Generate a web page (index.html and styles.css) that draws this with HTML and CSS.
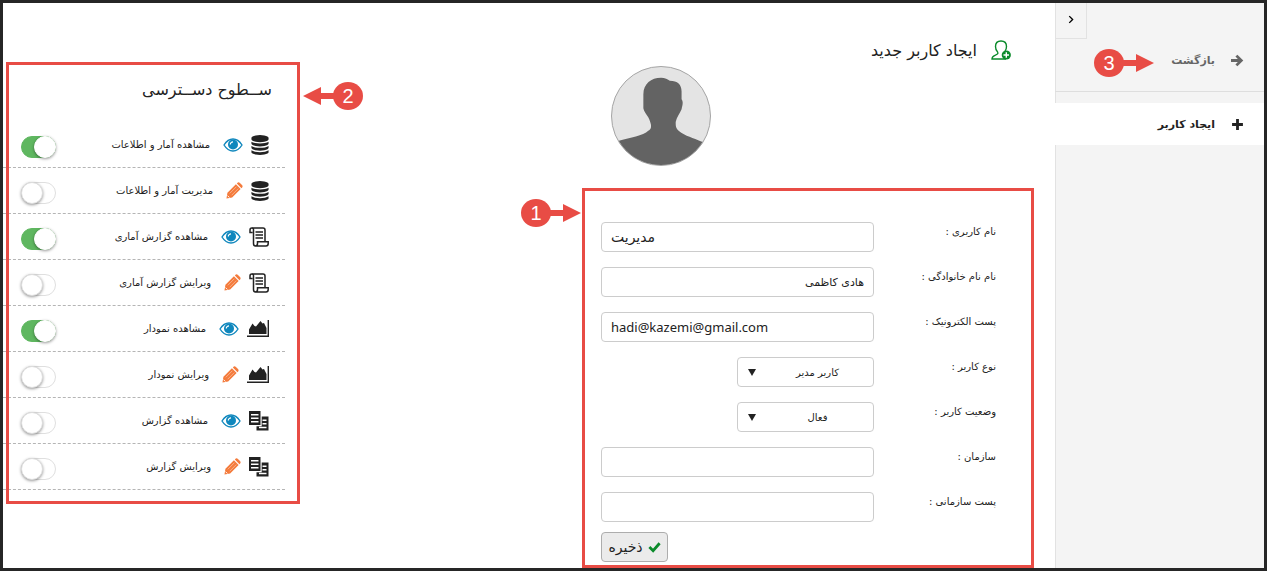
FILE: index.html
```html
<!DOCTYPE html>
<html lang="fa" dir="rtl">
<head>
  <meta charset="UTF-8" />
  <meta name="viewport" content="width=device-width, initial-scale=1.0" />
  <title>ایجاد کاربر جدید</title>
  <link rel="stylesheet" href="styles.css">
</head>
<body>
  <svg class="sprite" aria-hidden="true">
    <symbol id="i-eye" viewBox="0 0 20 14"><path d="M1 7C3.500 3 6.500 1 10 1S16.500 3 19 7C16.500 11 13.500 13 10 13S3.500 11 1 7z" fill="none" stroke="currentColor" stroke-width="1.400"/><circle cx="10" cy="6.500" r="5"/><path d="M7.300 6.500A2.700 2.700 0 0 1 10 3.800" fill="none" stroke="#fff" stroke-width="1.200"/></symbol>
    <symbol id="i-pencil" viewBox="0 0 18 18"><path d="M1.500 11.500L10.500 2.500 15.500 7.500 6.500 16.500 0.500 17.500zM11.500 1.500L12.500 0.600Q13.500 0 14.500 0.800L17.200 3.500Q18 4.500 17.300 5.500L16.400 6.500z"/><path d="M4 12L11 5M6 14L13 7" fill="none" stroke="#fff" stroke-opacity=".6" stroke-width=".7"/><path d="M1.600 14.400L3.600 16.400" stroke="#fff" stroke-width="1"/></symbol>
    <symbol id="i-database" viewBox="128 0 1536 1792"><path d="M896 768q237 0 443-43t325-127v170q0 69-103 128t-280 93.500-385 34.500-385-34.500-280-93.500-103-128v-170q119 84 325 127t443 43zm0 768q237 0 443-43t325-127v170q0 69-103 128t-280 93.500-385 34.500-385-34.500-280-93.500-103-128v-170q119 84 325 127t443 43zm0-384q237 0 443-43t325-127v170q0 69-103 128t-280 93.500-385 34.500-385-34.500-280-93.500-103-128v-170q119 84 325 127t443 43zm0-1152q208 0 385 34.500t280 93.500 103 128v128q0 69-103 128t-280 93.500-385 34.500-385-34.500-280-93.500-103-128v-128q0-69 103-128t280-93.500 385-34.500z"/></symbol>
    <symbol id="i-scroll" viewBox="0 0 20 20"><path d="M3 1H14Q16 1 16 3V14M3.500 5.500H1V3Q1 1 2.800 1T4.500 3V16.500Q4.500 19 6.500 19H17Q19.200 19 19.200 16.500V14.800H8.500V16.500Q8.500 19 6.300 19M6.500 5H14M6.500 8H14M6.500 11H14" fill="none" stroke="currentColor" stroke-width="1.500"/></symbol>
    <symbol id="i-chart" viewBox="0 0 22 17"><path d="M0 15.600H20.600V0H22V17H0zM2 14V9.500L5.500 3.500 7.500 6 9 6.500 13.500 1 15.500 3.500 17 3 19.500 8V14z"/></symbol>
    <symbol id="i-docs" viewBox="0 0 20 20"><path fill-rule="evenodd" d="M0 0H11.500V14H0zM2 3V4.500H9.500V3zM2 6.500V8H9.500V6.500zM2 10V11.500H9.500V10zM12.700 5.500H19.500V19.500H7.500V15.200H12.700zM13.500 8.500V10H17.500V8.500zM13.500 12V13.500H17.500V12zM10 15.800V17.200H17.500V15.800z"/></symbol>
  </svg>

  <div class="page">
    <aside class="sidebar">
      <button class="collapse" type="button" aria-label="بستن منو"><svg viewBox="0 0 6 8"><path d="M1 1l3 3-3 3"/></svg></button>
      <nav>
        <a class="nav-link back" href="#">
          <svg viewBox="0 0 12 12"><path d="M5 1.500L9.500 6 5 10.500M0 6h9" fill="none" stroke="currentColor" stroke-width="2.600"/></svg>
          بازگشت
        </a>
        <a class="nav-link active" href="#">
          <svg viewBox="0 0 12 12"><path d="M4.700 1h2.600v3.700H11v2.600H7.300V11H4.700V7.300H1V4.700h3.700z"/></svg>
          ایجاد کاربر
        </a>
      </nav>
      <span class="callout callout-3"><svg viewBox="0 0 34 18"><path d="M0 6h16V0l18 9-18 9v-6H0z"/></svg><b>3</b></span>
    </aside>

    <main>
      <section class="user">
        <h1>
          <svg viewBox="0 0 20 20"><path d="M14 11C15 10 15.500 8.500 15.500 6.500 15.500 3 13.500 1 10 1S4.500 3 4.500 6.500C4.500 9 5.300 10.800 6.600 12 7.500 13.500 6.500 14.500 4 15.300 2 16 1 17 1 19H15" fill="none" stroke="currentColor" stroke-width="1.400"/><circle cx="15.300" cy="15" r="4.600"/><path d="M12.500 15h5.500M15.300 12.300v5.500" stroke="#fff" stroke-width="1.400"/></svg>
          ایجاد کاربر جدید
        </h1>
        <svg class="avatar" viewBox="0 0 100 100" role="img" aria-label="تصویر کاربر">
          <path d="M0 77L8 75C18 72 32 70 37 65 41 63 40 59 39 56 37 49 33 47 32 42V28C32 17 40 11 50 11 54 11 57 13 59 14 67 14 71 18 71 25V33C73 36 72 39 71 43 69 48 66 51 65 56 65 60 65 62 68 65 75 71 83 72 91 76L100 78V100H0z"/>
        </svg>

        <form class="user-form">
          <label for="username">نام کاربری :</label>
          <input id="username" class="large" type="text" value="مدیریت">
          <label for="fullname">نام نام خانوادگی :</label>
          <input id="fullname" type="text" value="هادی کاظمی">
          <label for="email">پست الکترونیک :</label>
          <input id="email" class="latin" type="text" dir="ltr" value="hadi@kazemi@gmail.com">
          <label for="role">نوع کاربر :</label>
          <div class="select">
            <select id="role"><option>کاربر مدیر</option><option>کاربر عادی</option></select>
          </div>
          <label for="status">وضعیت کاربر :</label>
          <div class="select">
            <select id="status"><option>فعال</option><option>غیرفعال</option></select>
          </div>
          <label for="org">سازمان :</label>
          <input id="org" type="text">
          <label for="position">پست سازمانی :</label>
          <input id="position" type="text">
          <button class="save" type="submit">
            <svg viewBox="0 0 14 12"><path d="M1.500 6l4 4L12.500 2" fill="none" stroke="currentColor" stroke-width="3"/></svg>
            ذخیره
          </button>
          <span class="callout callout-1"><svg viewBox="0 0 34 18"><path d="M0 6h16V0l18 9-18 9v-6H0z"/></svg><b>1</b></span>
        </form>
      </section>

      <section class="access">
        <h2>ســطوح دســترسی</h2>
        <ul>
          <li>
            <svg class="i-db"><use href="#i-database"/></svg><svg class="i-eye"><use href="#i-eye"/></svg>
            <label for="a1">مشاهده آمار و اطلاعات</label><input id="a1" type="checkbox" checked>
          </li>
          <li>
            <svg class="i-db"><use href="#i-database"/></svg><svg class="i-pencil"><use href="#i-pencil"/></svg>
            <label for="a2">مدیریت آمار و اطلاعات</label><input id="a2" type="checkbox">
          </li>
          <li>
            <svg class="i-doc"><use href="#i-scroll"/></svg><svg class="i-eye"><use href="#i-eye"/></svg>
            <label for="a3">مشاهده گزارش آماری</label><input id="a3" type="checkbox" checked>
          </li>
          <li>
            <svg class="i-doc"><use href="#i-scroll"/></svg><svg class="i-pencil"><use href="#i-pencil"/></svg>
            <label for="a4">ویرایش گزارش آماری</label><input id="a4" type="checkbox">
          </li>
          <li>
            <svg class="i-chart"><use href="#i-chart"/></svg><svg class="i-eye"><use href="#i-eye"/></svg>
            <label for="a5">مشاهده نمودار</label><input id="a5" type="checkbox" checked>
          </li>
          <li>
            <svg class="i-chart"><use href="#i-chart"/></svg><svg class="i-pencil"><use href="#i-pencil"/></svg>
            <label for="a6">ویرایش نمودار</label><input id="a6" type="checkbox">
          </li>
          <li>
            <svg class="i-doc"><use href="#i-docs"/></svg><svg class="i-eye"><use href="#i-eye"/></svg>
            <label for="a7">مشاهده گزارش</label><input id="a7" type="checkbox">
          </li>
          <li>
            <svg class="i-doc"><use href="#i-docs"/></svg><svg class="i-pencil"><use href="#i-pencil"/></svg>
            <label for="a8">ویرایش گزارش</label><input id="a8" type="checkbox">
          </li>
        </ul>
        <span class="callout callout-2"><b>2</b><svg viewBox="0 0 34 18"><path d="M34 6H18V0L0 9l18 9v-6h16z"/></svg></span>
      </section>
    </main>
  </div>
</body>
</html>
```
FILE: styles.css
```css
*, *::before, *::after {
  box-sizing: border-box;
}
body {
  margin: 0;
  font-family: "DejaVu Sans", sans-serif;
  font-size: 11px;
  color: #222;
  background: #fff;
}
svg {
  fill: currentColor;
  flex: none;
}
.sprite {
  display: none;
}
input, select, button {
  font-family: inherit;
  font-size: inherit;
  color: inherit;
}
label {
  font-size: 10px;
}
h1, h2 {
  margin: 0;
  font-weight: normal;
  font-size: 16px;
}
.page {
  display: flex;
  min-height: 100vh;
  border: 3px solid #262626;
}

/* sidebar */
.sidebar {
  position: relative;
  flex: none;
  width: 209px;
  background: #f4f4f4;
  box-shadow: inset 1px 0 #e2e2e2;
}
.collapse {
  display: block;
  width: 32px;
  height: 36px;
  margin-right: auto;
  padding: 0;
  background: none;
  border: 1px solid #e2e2e2;
  border-top: 0;
}
.collapse svg {
  width: 7px;
  height: 9px;
  fill: none;
  stroke: #000;
  stroke-width: 1.2;
}
.nav-link {
  display: flex;
  align-items: center;
  gap: 16px;
  height: 42px;
  padding-right: 20px;
  color: #222;
  font-weight: bold;
  text-decoration: none;
}
.nav-link svg {
  width: 13px;
  height: 13px;
}
.nav-link.back {
  height: 53px;
  padding-bottom: 9px;
  color: #666;
  border-bottom: 1px solid #dedede;
}
.nav-link.active {
  margin-top: 11px;
  background: #fff;
}

/* user form */
main {
  display: flex;
  flex: 1;
  justify-content: space-between;
  align-items: flex-start;
}
.user {
  flex: none;
  width: 452px;
  margin-right: 21px;
}
.user h1 {
  display: flex;
  align-items: center;
  gap: 14px;
  height: 63px;
  padding: 31px 23px 0 0;
}
.user h1 svg {
  width: 20px;
  height: 20px;
  color: #0a8a2a;
}
.avatar {
  display: block;
  width: 100px;
  height: 100px;
  margin: 0 auto 22px 29px;
  color: #636363;
  background: #e4e4e4;
  border: 1px solid #a5a5a5;
  border-radius: 50%;
}
.user-form {
  position: relative;
  display: grid;
  grid-template-columns: 122px 1fr;
  grid-template-rows: repeat(7, 30px) 25px;
  row-gap: 15px;
  padding: 31px 35px 3px 16px;
  border: 3px solid #e84c45;
}
.user-form label {
  line-height: 20px;
}
.user-form input, .user-form select {
  width: 100%;
  height: 30px;
  padding: 0 9px;
  background: #fff;
  border: 1px solid #ccc;
  border-radius: 4px;
}
.user-form .large {
  font-size: 14px;
  text-align: left;
}
.user-form .latin {
  font-family: "Noto Sans", sans-serif;
  font-size: 13px;
}
.select {
  position: relative;
  width: 137px;
}
.user-form select {
  appearance: none;
  padding: 0 16px 0 40px;
  font-size: 10px;
  text-align: center;
  text-align-last: center;
}
.select::after {
  content: "";
  position: absolute;
  left: 11px;
  top: 12px;
  border: 4px solid transparent;
  border-top: 7px solid #222;
  border-bottom: 0;
  pointer-events: none;
}
.save {
  display: flex;
  grid-column: 2;
  align-items: center;
  justify-content: center;
  justify-self: end;
  gap: 5px;
  width: 67px;
  height: 30px;
  margin-top: -5px;
  padding: 0;
  font-size: 14px;
  background: #ebebeb;
  border: 1px solid #adadad;
  border-radius: 4px;
}
.save svg {
  width: 13px;
  height: 12px;
  color: #0a8a2a;
}

/* access levels */
.access {
  position: relative;
  flex: none;
  width: 297px;
  margin-top: 59px;
  padding-bottom: 14px;
}
.access::after {
  content: "";
  position: absolute;
  inset: 0 0 0 3px;
  border: 3px solid #e84c45;
  pointer-events: none;
}
.access h2 {
  height: 60px;
  padding-right: 28px;
  line-height: 56px;
}
.access ul {
  margin: 0 15px 0 0;
  padding: 0;
  list-style: none;
}
.access li {
  display: flex;
  align-items: center;
  height: 46px;
  padding: 0 16px 0 18px;
  border-bottom: 1px dashed #b5b5b5;
}
.i-doc {
  width: 20px;
  height: 20px;
}
.i-db {
  width: 18px;
  height: 20px;
}
.i-chart {
  width: 22px;
  height: 17px;
}
.i-eye {
  width: 20px;
  height: 14px;
  color: #0f87bd;
}
.i-pencil {
  width: 17px;
  height: 17px;
  color: #f47b3c;
}
.i-eye, .i-pencil {
  margin: 0 8px 0 13px;
}
.access input {
  position: relative;
  appearance: none;
  width: 35px;
  height: 22px;
  margin: 4px auto 0 0;
  border: 1px solid #dfdfdf;
  border-radius: 11px;
}
.access input::before {
  content: "";
  position: absolute;
  top: -1px;
  left: -1px;
  width: 22px;
  height: 22px;
  background: #fff;
  border: 1px solid #ddd;
  border-radius: 50%;
  box-shadow: 0 1px 3px rgba(0,0,0,0.4);
}
.access input:checked {
  background: #5fb760;
  border-color: #5fb760;
}
.access input:checked::before {
  left: 12px;
  border-color: #fff;
}

/* numbered callouts */
.callout {
  position: absolute;
  display: flex;
  flex-direction: row-reverse;
  align-items: center;
  direction: ltr;
  color: #e84c45;
}
.callout b {
  width: 30px;
  height: 28px;
  border-radius: 50%;
  background: #e84c45;
  color: #fff;
  font: 20px/28px "Liberation Sans", sans-serif;
  text-align: center;
}
.callout svg {
  width: 34px;
  height: 18px;
  margin: 0 -4px;
}
.callout-1 {
  top: 8px;
  left: -64px;
}
.callout-2 {
  top: 20px;
  left: 304px;
}
.callout-3 {
  top: 46px;
  left: 39px;
}
```
